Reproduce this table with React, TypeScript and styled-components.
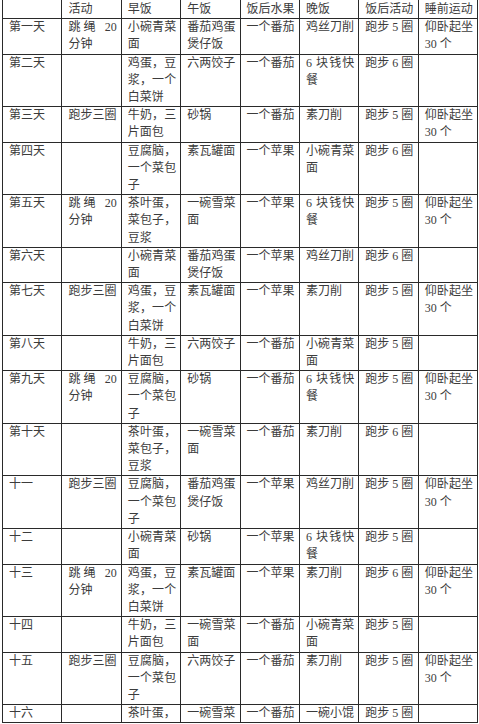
import styled, { createGlobalStyle } from "styled-components";

const GlobalStyle = createGlobalStyle`
  html, body {
    margin: 0;
    padding: 0;
    background: #fff;
  }
  body {
    font-family: "Liberation Serif", "Noto Sans CJK SC", serif;
    color: #3c3c3c;
  }
`

const headers = ["", "活动", "早饭", "午饭", "饭后水果", "晚饭", "饭后活动", "睡前运动"]

const plan: string[][] = [
    ["第一天", "跳绳 20分钟", "小碗青菜面", "番茄鸡蛋煲仔饭", "一个番茄", "鸡丝刀削", "跑步 5 圈", "仰卧起坐 30 个"],
    ["第二天", "", "鸡蛋，豆浆，一个白菜饼", "六两饺子", "一个番茄", "6 块钱快餐", "跑步 6 圈", ""],
    ["第三天", "跑步三圈", "牛奶，三片面包", "砂锅", "一个番茄", "素刀削", "跑步 5 圈", "仰卧起坐 30 个"],
    ["第四天", "", "豆腐脑，一个菜包子", "素瓦罐面", "一个苹果", "小碗青菜面", "跑步 6 圈", ""],
    ["第五天", "跳绳 20分钟", "茶叶蛋，菜包子，豆浆", "一碗雪菜面", "一个苹果", "6 块钱快餐", "跑步 5 圈", "仰卧起坐 30 个"],
    ["第六天", "", "小碗青菜面", "番茄鸡蛋煲仔饭", "一个苹果", "鸡丝刀削", "跑步 6 圈", ""],
    ["第七天", "跑步三圈", "鸡蛋，豆浆，一个白菜饼", "素瓦罐面", "一个苹果", "素刀削", "跑步 5 圈", "仰卧起坐 30 个"],
    ["第八天", "", "牛奶，三片面包", "六两饺子", "一个番茄", "小碗青菜面", "跑步 5 圈", ""],
    ["第九天", "跳绳 20分钟", "豆腐脑，一个菜包子", "砂锅", "一个番茄", "6 块钱快餐", "跑步 5 圈", "仰卧起坐 30 个"],
    ["第十天", "", "茶叶蛋，菜包子，豆浆", "一碗雪菜面", "一个番茄", "素刀削", "跑步 6 圈", ""],
    ["十一", "跑步三圈", "豆腐脑，一个菜包子", "番茄鸡蛋煲仔饭", "一个苹果", "鸡丝刀削", "跑步 5 圈", "仰卧起坐 30 个"],
    ["十二", "", "小碗青菜面", "砂锅", "一个苹果", "6 块钱快餐", "跑步 5 圈", ""],
    ["十三", "跳绳 20分钟", "鸡蛋，豆浆，一个白菜饼", "素瓦罐面", "一个苹果", "素刀削", "跑步 6 圈", "仰卧起坐 30 个"],
    ["十四", "", "牛奶，三片面包", "一碗雪菜面", "一个番茄", "小碗青菜面", "跑步 5 圈", ""],
    ["十五", "跑步三圈", "豆腐脑，一个菜包子", "六两饺子", "一个番茄", "素刀削", "跑步 5 圈", "仰卧起坐 30 个"],
    ["十六", "", "茶叶蛋，", "一碗雪菜", "一个番茄", "一碗小馄", "跑步 5 圈", ""],
]

export default function App() {
    return (
        <>
            <GlobalStyle/>
            <Page>
                <Sheet>
                    <colgroup>
                        {headers.map((_, i) => <Column key={i}/>)}
                    </colgroup>
                    <thead>
                    <tr>
                        {headers.map((h, i) => <HeadCell key={i}>{h}</HeadCell>)}
                    </tr>
                    </thead>
                    <tbody>
                    {plan.map((row, r) => (
                        <tr key={r}>
                            {row.map((text, c) => <Cell key={c}>{text}</Cell>)}
                        </tr>
                    ))}
                    </tbody>
                </Sheet>
            </Page>
        </>
    )
}

const Page = styled.div`
  height: 724px;
  overflow: hidden;
  padding-left: 2px;
`

const Sheet = styled.table`
  width: 475px;
  table-layout: fixed;
  border-collapse: collapse;
  margin-top: -1px;
  font-size: 12px;
  line-height: 17.2px;
`

const Column = styled.col`
  width: 59.4px;
`

const HeadCell = styled.th`
  border: 1px solid #2a2a2a;
  padding: 1px 4px 0 6px;
  font-weight: normal;
  text-align: left;
  vertical-align: top;
  white-space: nowrap;
  overflow: hidden;
`

const Cell = styled.td`
  border: 1px solid #2a2a2a;
  padding: 0 4px 0 6px;
  text-align: justify;
  vertical-align: top;
  word-break: normal;
`
